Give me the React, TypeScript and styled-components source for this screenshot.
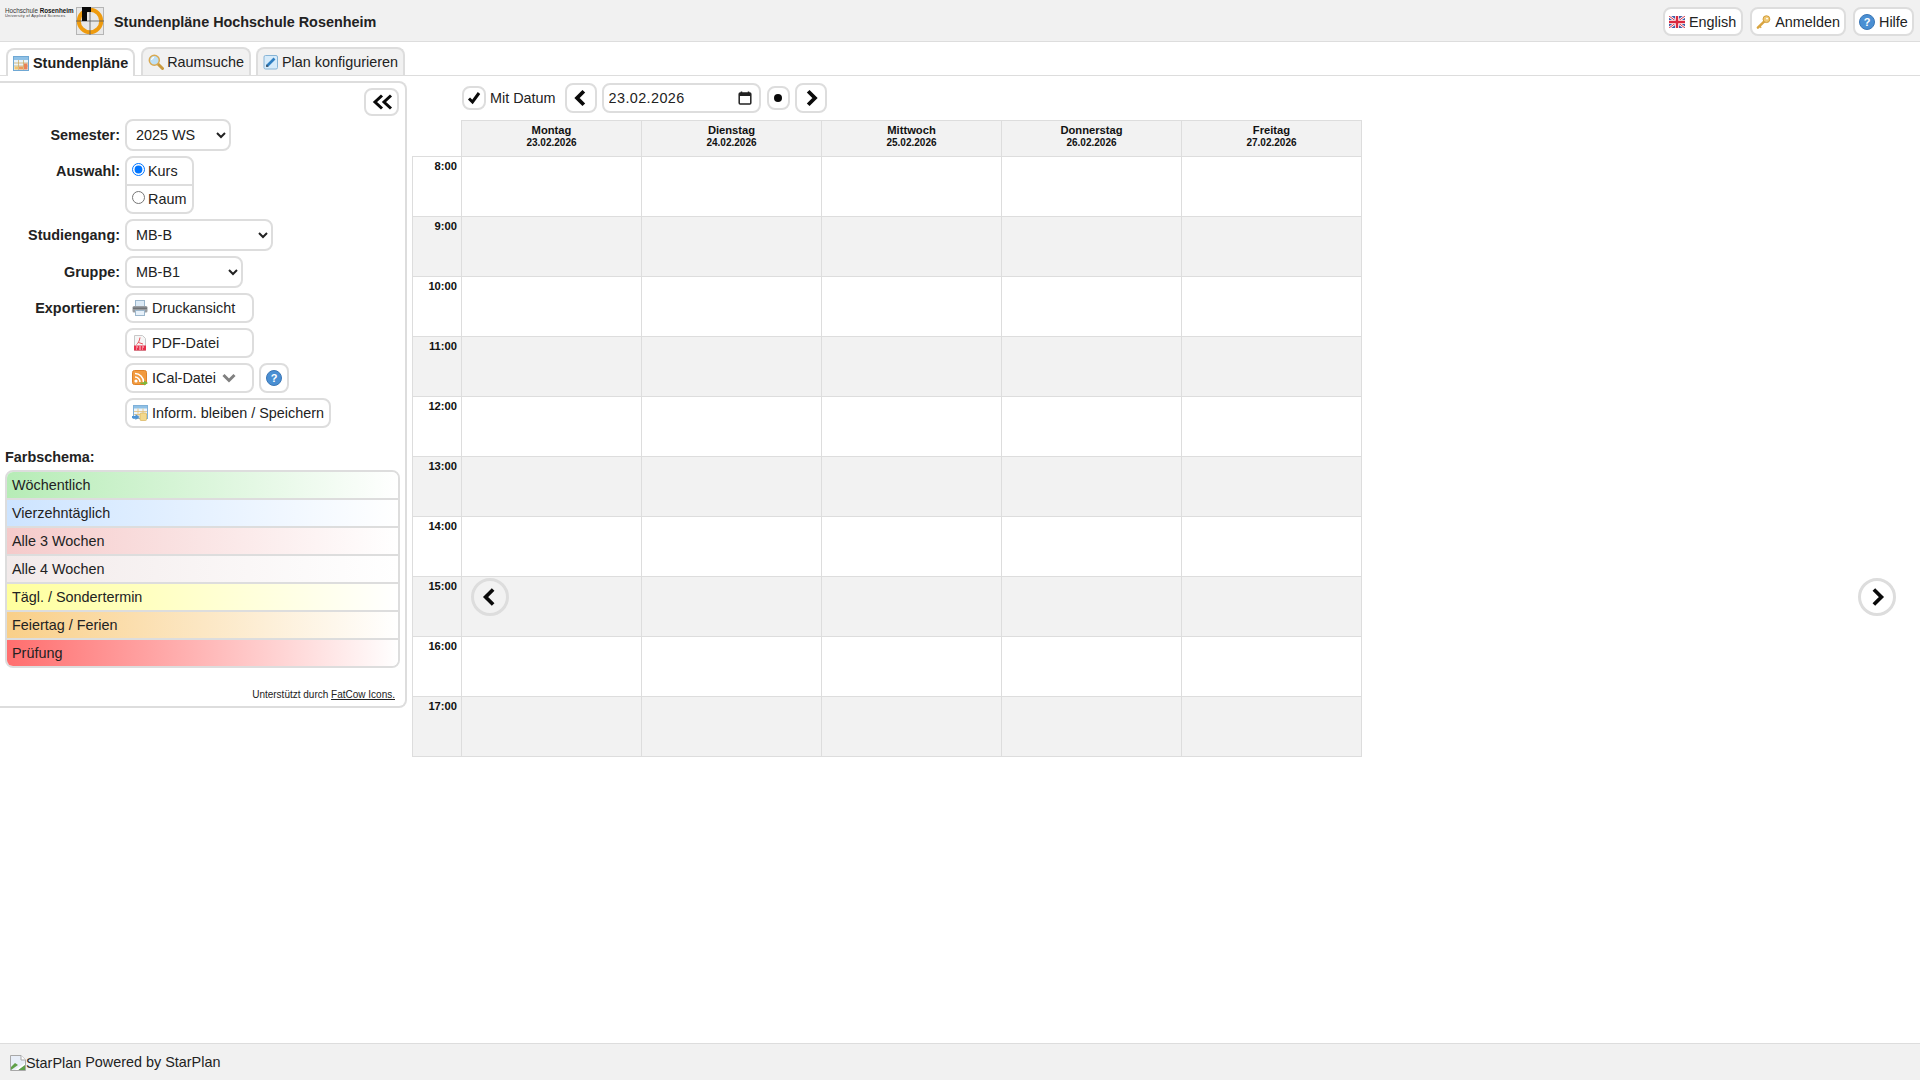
import React from "react";
import styled, { createGlobalStyle } from "styled-components";

const GlobalStyle = createGlobalStyle`
  html, body { margin: 0; padding: 0; height: 100%; background: #fff; }
  body { font-family: "Liberation Sans", Arial, sans-serif; font-size: 14.4px; color: #222; }
  #root { height: 100%; }
  * { box-sizing: border-box; }
`;

const Page = styled.div`
  position: relative;
  height: 100vh;
  display: flex;
  flex-direction: column;
  overflow: hidden;
`;

const Header = styled.header`
  height: 42px;
  flex: none;
  display: flex;
  align-items: center;
  padding: 1px 6px 0 5px;
  background: #f1f1f1;
  border-bottom: 1px solid #ddd;
`;

const LogoText = styled.div`
  width: 71px;
  align-self: flex-start;
  padding-top: 7px;
  display: flex;
  flex-direction: column;
  font-size: 6.3px;
  line-height: 6px;
  color: #333;
  white-space: nowrap;
  b { color: #111; }
`;

const LogoSub = styled.span`
  font-size: 3.9px;
  line-height: 4px;
  letter-spacing: 0.28px;
`;

const Title = styled.h1`
  margin: 2px 0 0 10px;
  font-size: 14.4px;
  font-weight: 700;
  color: #222;
`;

const HeaderActions = styled.nav`
  margin-left: auto;
  padding-top: 1px;
  display: flex;
  gap: 7px;
`;

const PillButton = styled.button<{ $w?: number; $h?: number }>`
  height: ${(p) => p.$h ?? 30}px;
  ${(p) => (p.$w ? `width: ${p.$w}px;` : "")}
  display: inline-flex;
  align-items: center;
  gap: 4px;
  padding: 0 5px;
  border: 2px solid #ddd;
  border-radius: 8px;
  background: #fff;
  font: inherit;
  color: inherit;
  white-space: nowrap;
`;

const HeaderButton = styled(PillButton)`
  height: 29px;
  padding: 0 4px;
`;

const TabBar = styled.div`
  height: 34px;
  flex: none;
  display: flex;
  align-items: flex-end;
  padding-left: 6px;
  gap: 5px;
  border-bottom: 1px solid #ddd;
`;

const Tab = styled.div<{ $active?: boolean }>`
  height: 28px;
  display: flex;
  align-items: center;
  gap: ${(p) => (p.$active ? 4 : 3)}px;
  padding: 0 5px;
  border: 2px solid #ddd;
  border-bottom: 0;
  border-radius: 8px 8px 0 0;
  background: ${(p) => (p.$active ? "#fff" : "#f1f1f1")};
  font-weight: ${(p) => (p.$active ? 700 : 400)};
  position: relative;
  top: ${(p) => (p.$active ? 1 : 0)}px;
  margin-right: ${(p) => (p.$active ? 1 : 0)}px;
`;

const Body = styled.div`
  flex: 1;
  display: flex;
  align-items: flex-start;
  gap: 5px;
  min-height: 0;
`;

const Sidebar = styled.aside`
  width: 407px;
  height: 627px;
  flex: none;
  margin-top: 5px;
  padding: 5px 5px 0;
  border: 2px solid #ddd;
  border-left: 0;
  border-radius: 0 8px 8px 0;
`;

const CollapseRow = styled.div`
  display: flex;
  justify-content: flex-end;
  padding-right: 1px;
  margin-bottom: 3px;
`;

const IconButton = styled.button<{ $w: number; $h: number }>`
  width: ${(p) => p.$w}px;
  height: ${(p) => p.$h}px;
  padding: 0;
  display: inline-flex;
  align-items: center;
  justify-content: center;
  border: 2px solid #ddd;
  border-radius: 8px;
  background: #fff;
`;

const Form = styled.div`
  display: grid;
  grid-template-columns: 115px 1fr;
  column-gap: 5px;
  row-gap: 5px;
  align-items: start;
`;

const Label = styled.div<{ $h: number }>`
  font-weight: 700;
  text-align: right;
  line-height: ${(p) => p.$h}px;
  white-space: nowrap;
  color: #222;
`;

const Select = styled.select<{ $w: number }>`
  width: ${(p) => p.$w}px;
  height: 32px;
  display: block;
  padding: 0 0 0 5px;
  border: 2px solid #ddd;
  border-radius: 8px;
  background: #fff;
  font: inherit;
  color: #222;
`;

const RadioGroup = styled.div`
  width: 69px;
  border: 2px solid #ddd;
  border-radius: 8px;
`;

const RadioRow = styled.label`
  height: 26px;
  display: flex;
  align-items: center;
  padding-left: 5px;
  gap: 3px;
  & + & { border-top: 2px solid #ddd; height: 28px; }
  input { margin: 0; position: relative; top: -2px; }
`;

const ExportStack = styled.div`
  display: flex;
  flex-direction: column;
  gap: 5px;
`;

const ExportLine = styled.div`
  display: flex;
  gap: 5px;
`;

const Caret = styled.span`
  display: inline-flex;
  margin-left: 2px;
`;

const SchemeTitle = styled.div`
  margin-top: 21px;
  font-weight: 700;
  line-height: 16px;
`;

const Legend = styled.div`
  margin-top: 5px;
  border: 2px solid #ddd;
  border-radius: 8px;
  overflow: hidden;
`;

const LegendRow = styled.div<{ $color: string }>`
  height: 28px;
  padding-left: 5px;
  line-height: 26px;
  background: linear-gradient(to right, ${(p) => p.$color}, #fff);
  border-bottom: 2px solid #ddd;
  color: #222;
  &:last-child { height: 26px; border-bottom: 0; }
`;

const Credit = styled.div`
  margin-top: 21px;
  padding-right: 5px;
  text-align: right;
  font-size: 10px;
  line-height: 12px;
  a { color: inherit; }
`;

const Main = styled.main`
  flex: none;
  padding-top: 7px;
`;

const Toolbar = styled.div`
  height: 30px;
  display: flex;
  align-items: center;
  padding-left: 50px;
  margin-bottom: 7px;
`;

const CheckBox = styled.span`
  width: 24px;
  height: 24px;
  display: inline-flex;
  align-items: center;
  justify-content: center;
  border: 2px solid #ddd;
  border-radius: 8px;
`;

const CheckLabel = styled.span`
  margin: 0 9px 0 4px;
`;

const DateField = styled.div`
  width: 159px;
  height: 30px;
  margin: 0 6px 0 5px;
  display: flex;
  align-items: center;
  padding: 0 7px 0 5px;
  border: 2px solid #ddd;
  border-radius: 8px;
`;

const DateInput = styled.input`
  flex: 1;
  min-width: 0;
  padding: 0;
  border: 0;
  outline: 0;
  font: inherit;
  letter-spacing: 0.4px;
  color: #222;
`;

const TodayButton = styled(IconButton)`
  margin-right: 5px;
`;

const Schedule = styled.div`
  display: grid;
  grid-template-columns: 49px repeat(4, 180px) 181px;
  grid-template-rows: 36px repeat(9, 60px) 61px;
`;

const CornerCell = styled.div``;

const DayHead = styled.div`
  border-top: 1px solid #ddd;
  border-left: 1px solid #ddd;
  background: #f2f2f2;
  padding-top: 3px;
  text-align: center;
  font-weight: 700;
  font-size: 11.2px;
  line-height: 12px;
  color: #111;
  &:nth-child(6) { border-right: 1px solid #ddd; }
`;

const DayDate = styled.div`
  margin-top: 1px;
  font-size: 10px;
`;

const TimeCell = styled.div<{ $odd: boolean; $last: boolean }>`
  border-top: 1px solid #ddd;
  border-left: 1px solid #ddd;
  ${(p) => (p.$last ? "border-bottom: 1px solid #ddd;" : "")}
  background: ${(p) => (p.$odd ? "#f2f2f2" : "#fff")};
  padding: 2px 4px 0 0;
  text-align: right;
  font-weight: 700;
  font-size: 11.2px;
  line-height: 14px;
  color: #111;
`;

const SlotCell = styled.div<{ $odd: boolean; $last: boolean; $end: boolean }>`
  border-top: 1px solid #ddd;
  border-left: 1px solid #ddd;
  ${(p) => (p.$last ? "border-bottom: 1px solid #ddd;" : "")}
  ${(p) => (p.$end ? "border-right: 1px solid #ddd;" : "")}
  background: ${(p) => (p.$odd ? "#f2f2f2" : "#fff")};
`;

const RoundNav = styled.button<{ $side: "left" | "right" }>`
  position: absolute;
  top: 578px;
  ${(p) => (p.$side === "left" ? "left: 471px;" : "right: 24px;")}
  width: 38px;
  height: 38px;
  padding: 0;
  display: flex;
  align-items: center;
  justify-content: center;
  border: 3px solid #ddd;
  border-radius: 50%;
  background: ${(p) => (p.$side === "left" ? "#f2f2f2" : "#fff")};
`;

const Footer = styled.footer`
  height: 37px;
  flex: none;
  display: flex;
  align-items: center;
  padding: 0 10px;
  background: #f1f1f1;
  border-top: 1px solid #ddd;
  gap: 4px;
  margin-top: auto;
`;

const BrokenImage = styled.span`
  display: inline-flex;
  align-items: flex-end;
  position: relative;
  top: 1px;
`;

/* ---------- icons ---------- */

const Chevron = ({ dir, size = 18, weight = 3.4 }: { dir: "l" | "r"; size?: number; weight?: number }) => (
  <svg width={size} height={size} viewBox="0 0 16 16">
    <path
      d={dir === "l" ? "M10.5 2 L4.5 8 L10.5 14" : "M5.5 2 L11.5 8 L5.5 14"}
      fill="none"
      stroke="#0a0a0a"
      strokeWidth={weight}
    />
  </svg>
);

const DoubleChevron = () => (
  <svg width="22" height="16" viewBox="0 0 22 16">
    <path d="M11 1.5 L4 8 L11 14.5 M20 1.5 L13 8 L20 14.5" fill="none" stroke="#0a0a0a" strokeWidth="3" />
  </svg>
);

const CheckMark = () => (
  <svg width="14" height="14" viewBox="0 0 14 14">
    <path d="M2 7.5 L5.5 11 L12 2" fill="none" stroke="#0a0a0a" strokeWidth="3" />
  </svg>
);

const CalendarGlyph = () => (
  <svg width="14" height="14" viewBox="0 0 14 14">
    <path d="M3.5 0.5 v2 M10.5 0.5 v2" stroke="#222" strokeWidth="1.5" />
    <rect x="1.2" y="2" width="11.6" height="11" rx="1" fill="none" stroke="#222" strokeWidth="1.5" />
    <rect x="1.2" y="2" width="11.6" height="3" fill="#222" />
  </svg>
);

const CalendarIcon = () => (
  <svg width="16" height="16" viewBox="0 0 16 16">
    <rect x="0.5" y="1.5" width="15" height="14" fill="#e9f3fb" stroke="#6fa8d4" />
    <rect x="1" y="2" width="14" height="3" fill="#8fc1e6" />
    <path d="M1 8h14M1 11h14M5.5 5v10M10.5 5v10" stroke="#c9a65a" strokeWidth="0.7" />
    <rect x="6" y="11.5" width="4" height="3" fill="#ef9a5a" />
    <rect x="11" y="8.5" width="3.5" height="6" fill="#e9825a" />
    <rect x="1.5" y="11.5" width="3.5" height="3" fill="#f3c56d" />
  </svg>
);

const SearchIcon = () => (
  <svg width="16" height="16" viewBox="0 0 16 16">
    <path d="M9.5 9.5 L14.5 14.5" stroke="#c99a3e" strokeWidth="3" strokeLinecap="round" />
    <circle cx="6.3" cy="6.3" r="5" fill="#bfe0f5" stroke="#d9a951" strokeWidth="1.5" />
    <path d="M3.5 6 A3 3 0 0 1 6 3.4" fill="none" stroke="#fff" strokeWidth="1.2" />
  </svg>
);

const EditIcon = () => (
  <svg width="16" height="16" viewBox="0 0 16 16">
    <rect x="1" y="1.5" width="13.5" height="13.5" rx="1.5" fill="#d6ebfa" stroke="#86b4d6" />
    <path d="M4 12 L11.5 4.5" stroke="#2f7fc1" strokeWidth="2.6" />
    <path d="M3 13 L3.5 10.5 L5.5 12.5 Z" fill="#2c3e50" />
  </svg>
);

const FlagIcon = () => (
  <svg width="16" height="12" viewBox="0 0 16 12">
    <rect width="16" height="12" fill="#3f5ea8" />
    <path d="M0 0 L16 12 M16 0 L0 12" stroke="#fff" strokeWidth="2.6" />
    <path d="M0 0 L16 12 M16 0 L0 12" stroke="#d9364a" strokeWidth="1" />
    <path d="M8 0 V12 M0 6 H16" stroke="#fff" strokeWidth="4" />
    <path d="M8 0 V12 M0 6 H16" stroke="#d9293f" strokeWidth="2.4" />
  </svg>
);

const KeyIcon = () => (
  <svg width="16" height="16" viewBox="0 0 16 16">
    <path d="M8.5 7.5 L2 14" stroke="#d9a43f" strokeWidth="2.6" strokeLinecap="round" />
    <path d="M4 12.5 L5.5 14" stroke="#d9a43f" strokeWidth="1.4" />
    <circle cx="11" cy="5" r="3.6" fill="#f0c873" stroke="#cf9a38" />
    <circle cx="11.6" cy="4.4" r="1" fill="#fff" />
  </svg>
);

const HelpIcon = () => (
  <svg width="16" height="16" viewBox="0 0 16 16">
    <circle cx="8" cy="8" r="7.5" fill="#4a8fd3" stroke="#3a76b5" />
    <text x="8" y="12" textAnchor="middle" fontFamily="Liberation Sans" fontWeight="700" fontSize="11" fill="#fff">?</text>
  </svg>
);

const PrinterIcon = () => (
  <svg width="16" height="16" viewBox="0 0 16 16">
    <rect x="3.5" y="0.5" width="9" height="6" fill="#dceaf6" stroke="#9bb6cc" />
    <rect x="0.5" y="6" width="15" height="6.5" rx="1.5" fill="#9a9da1" />
    <rect x="1" y="7.5" width="14" height="1.5" fill="#6f7276" />
    <rect x="3.5" y="10.5" width="9" height="5" fill="#e7f1fa" stroke="#9bb6cc" />
  </svg>
);

const PdfIcon = () => (
  <svg width="16" height="16" viewBox="0 0 16 16">
    <path d="M2.5 0.5 H10.5 L13.5 3.5 V15.5 H2.5 Z" fill="#f6f6f6" stroke="#c8c8c8" />
    <path d="M8 2.5 C7.5 6 6 8.5 4.5 9.5 M6.5 7.5 L11 9" fill="none" stroke="#e2434b" strokeWidth="0.9" />
    <rect x="2" y="10.5" width="12" height="5" fill="#e8304a" />
    <path d="M4 12h2M7 12h2M10 12h2M4 14h1M7 14h2M10 14h1" stroke="#fff" strokeWidth="0.8" />
  </svg>
);

const RssIcon = () => (
  <svg width="16" height="16" viewBox="0 0 16 16">
    <rect x="0.5" y="0.5" width="14" height="14" rx="2" fill="#f29a3e" stroke="#de8229" />
    <circle cx="4" cy="11" r="1.6" fill="#fff" />
    <path d="M3 7 A5 5 0 0 1 8 12 M3 3.5 A8.5 8.5 0 0 1 11.5 12" fill="none" stroke="#fff" strokeWidth="1.6" />
    <path d="M8.5 12.5 H12 V10.5 L16 13 L12 15.5 V14 H8.5 Z" fill="#7cb93c" />
  </svg>
);

const PlanIcon = () => (
  <svg width="16" height="16" viewBox="0 0 16 16">
    <rect x="1.5" y="0.5" width="14" height="13" fill="#eef5fb" stroke="#7fb0d8" />
    <rect x="2" y="1" width="13" height="2.5" fill="#8fc1e6" />
    <path d="M2 6.5h13M2 9.5h13M6 3.5v10M11 3.5v10" stroke="#e3bf76" strokeWidth="0.8" />
    <rect x="8" y="8" width="6.5" height="7.5" rx="1" fill="#f3d98d" stroke="#d9b35a" strokeWidth="0.7" />
    <path d="M0 11 H3.5 V9 L7.5 12 L3.5 15 V13.2 H0 Z" fill="#4d94d6" />
  </svg>
);

const SmallCaret = () => (
  <svg width="14" height="10" viewBox="0 0 14 10">
    <path d="M1.5 2 L7 7.5 L12.5 2" fill="none" stroke="#808080" strokeWidth="3" />
  </svg>
);

const BrokenImageIcon = () => (
  <svg width="16" height="16" viewBox="0 0 16 16">
    <path d="M0.5 0.5 H11 L15.5 5 V15.5 H0.5 Z" fill="#e8eef8" stroke="#a8a8a8" />
    <path d="M11 0.5 V5 H15.5" fill="#fff" stroke="#a8a8a8" />
    <path d="M1 15 L1 12 L5 8 L8 10 L1 15" fill="#5ea04a" />
    <path d="M8 15 L15 10 L15 15 Z" fill="#5ea04a" />
    <path d="M5 15 L15 8 L15 9.5 L8 15 Z" fill="#fff" />
  </svg>
);

const CampusLogo = () => (
  <svg width="28" height="28" viewBox="0 0 28 28">
    <rect x="0.5" y="0.5" width="27" height="27" fill="#e8e8e8" stroke="#b5b5b5" />
    <circle cx="14" cy="14" r="11.2" fill="none" stroke="#ee9b0f" strokeWidth="4" />
    <path d="M14 0 V28 M0 14 H28" stroke="#555" strokeWidth="0.8" />
    <path d="M6 0 H15 V5 H11 V14 H6 Z" fill="#0a0a0a" />
  </svg>
);

/* ---------- data ---------- */

const hours = ["8:00", "9:00", "10:00", "11:00", "12:00", "13:00", "14:00", "15:00", "16:00", "17:00"];
const days = [
  ["Montag", "23.02.2026"],
  ["Dienstag", "24.02.2026"],
  ["Mittwoch", "25.02.2026"],
  ["Donnerstag", "26.02.2026"],
  ["Freitag", "27.02.2026"],
];
const legend = [
  ["Wöchentlich", "#b6ecb6"],
  ["Vierzehntäglich", "#cde4ff"],
  ["Alle 3 Wochen", "#f5caca"],
  ["Alle 4 Wochen", "#f2eaea"],
  ["Tägl. / Sondertermin", "#ffff9e"],
  ["Feiertag / Ferien", "#f9cf88"],
  ["Prüfung", "#ff6e6e"],
];

export default function App() {
  return (
    <Page>
      <GlobalStyle />
      <Header>
        <LogoText>
          <span>
            Hochschule <b>Rosenheim</b>
          </span>
          <LogoSub>University of Applied Sciences</LogoSub>
        </LogoText>
        <CampusLogo />
        <Title>Stundenpläne Hochschule Rosenheim</Title>
        <HeaderActions>
          <HeaderButton $w={80}><FlagIcon /> English</HeaderButton>
          <HeaderButton $w={96}><KeyIcon /> Anmelden</HeaderButton>
          <HeaderButton $w={61}><HelpIcon /> Hilfe</HeaderButton>
        </HeaderActions>
      </Header>

      <TabBar>
        <Tab $active><CalendarIcon /> Stundenpläne</Tab>
        <Tab><SearchIcon /> Raumsuche</Tab>
        <Tab><EditIcon /> Plan konfigurieren</Tab>
      </TabBar>

      <Body>
        <Sidebar>
          <CollapseRow>
            <IconButton $w={35} $h={28}><DoubleChevron /></IconButton>
          </CollapseRow>
          <Form>
            <Label $h={32}>Semester:</Label>
            <Select $w={106} defaultValue="2025 WS"><option>2025 WS</option></Select>

            <Label $h={30}>Auswahl:</Label>
            <RadioGroup>
              <RadioRow><input type="radio" name="auswahl" defaultChecked /> Kurs</RadioRow>
              <RadioRow><input type="radio" name="auswahl" /> Raum</RadioRow>
            </RadioGroup>

            <Label $h={32}>Studiengang:</Label>
            <Select $w={148} defaultValue="MB-B"><option>MB-B</option></Select>

            <Label $h={32}>Gruppe:</Label>
            <Select $w={118} defaultValue="MB-B1"><option>MB-B1</option></Select>

            <Label $h={30}>Exportieren:</Label>
            <ExportStack>
              <PillButton $w={129}><PrinterIcon /> Druckansicht</PillButton>
              <PillButton $w={129}><PdfIcon /> PDF-Datei</PillButton>
              <ExportLine>
                <PillButton $w={129}>
                  <RssIcon /> ICal-Datei <Caret><SmallCaret /></Caret>
                </PillButton>
                <IconButton $w={30} $h={30}><HelpIcon /></IconButton>
              </ExportLine>
              <ExportLine>
                <PillButton><PlanIcon /> Inform. bleiben / Speichern</PillButton>
              </ExportLine>
            </ExportStack>
          </Form>

          <SchemeTitle>Farbschema:</SchemeTitle>
          <Legend>
            {legend.map(([name, color]) => (
              <LegendRow key={name} $color={color}>{name}</LegendRow>
            ))}
          </Legend>
          <Credit>
            Unterstützt durch <a href="#fatcow">FatCow Icons.</a>
          </Credit>
        </Sidebar>

        <Main>
          <Toolbar>
            <CheckBox><CheckMark /></CheckBox>
            <CheckLabel>Mit Datum</CheckLabel>
            <IconButton $w={32} $h={30}><Chevron dir="l" /></IconButton>
            <DateField>
              <DateInput defaultValue="23.02.2026" aria-label="Datum" />
              <CalendarGlyph />
            </DateField>
            <TodayButton $w={23} $h={24}>
              <svg width="8" height="8" viewBox="0 0 8 8"><circle cx="4" cy="4" r="4" fill="#0a0a0a" /></svg>
            </TodayButton>
            <IconButton $w={32} $h={30}><Chevron dir="r" /></IconButton>
          </Toolbar>

          <Schedule>
            <CornerCell />
            {days.map(([day, date]) => (
              <DayHead key={day}>
                {day}
                <DayDate>{date}</DayDate>
              </DayHead>
            ))}
            {hours.map((hour, i) => (
              <React.Fragment key={hour}>
                <TimeCell $odd={i % 2 === 1} $last={i === hours.length - 1}>{hour}</TimeCell>
                {days.map(([day], d) => (
                  <SlotCell key={day} $odd={i % 2 === 1} $last={i === hours.length - 1} $end={d === days.length - 1} />
                ))}
              </React.Fragment>
            ))}
          </Schedule>
        </Main>
      </Body>

      <RoundNav $side="left"><Chevron dir="l" size={20} weight={3} /></RoundNav>
      <RoundNav $side="right"><Chevron dir="r" size={20} weight={3} /></RoundNav>

      <Footer>
        <BrokenImage><BrokenImageIcon />StarPlan</BrokenImage>
        <span>Powered by StarPlan</span>
      </Footer>
    </Page>
  );
}
